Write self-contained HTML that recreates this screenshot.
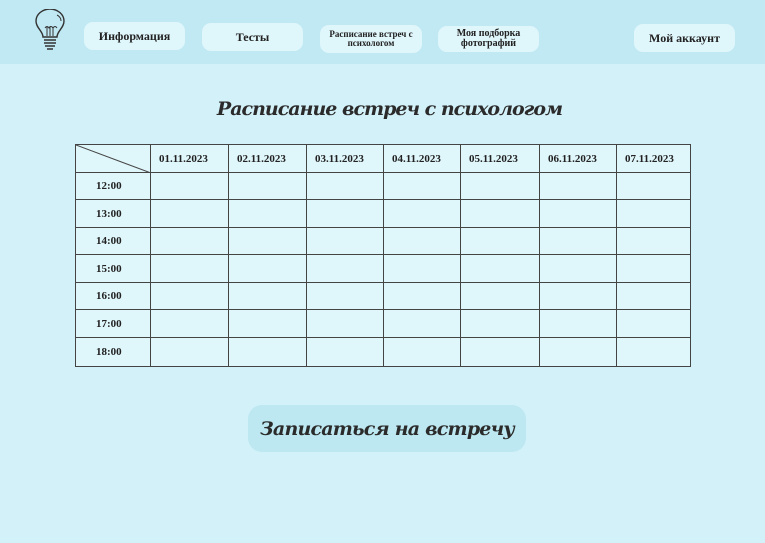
<!DOCTYPE html>
<html><head><meta charset="utf-8"><style>
*{margin:0;padding:0;box-sizing:border-box}
body{width:765px;height:543px;background:#d3f1f9;position:relative;overflow:hidden;font-family:"Liberation Serif","DejaVu Serif",serif;color:#222}
.hdr{position:absolute;left:0;top:0;width:765px;height:64px;background:#c0e9f3}
.btn{position:absolute;background:#dff6fb;border-radius:9px;display:flex;align-items:center;justify-content:center;text-align:center;font-weight:bold;font-size:12px;line-height:1.05;color:#222}
.title{position:absolute;left:0;width:765px;top:98px;text-align:center;font-family:"DejaVu Serif",serif;font-style:italic;font-weight:bold;font-size:19px;color:#2b2b2b;letter-spacing:-1px;white-space:nowrap;padding-left:14px}
table{position:absolute;left:75px;top:144px;width:615px;border-collapse:collapse;table-layout:fixed;background:#dff6fb}
td{border:1px solid #444;font-size:11px;font-weight:bold;padding:0 0 0 8px;text-align:left;overflow:hidden;white-space:nowrap;line-height:12px}
.cta{position:absolute;left:248px;top:405px;width:278px;height:47px;border-radius:14px;background:#bde8f1;display:flex;align-items:center;justify-content:center;font-family:"DejaVu Serif",serif;font-style:italic;font-weight:bold;font-size:19px;color:#2b2b2b;letter-spacing:-0.8px;white-space:nowrap}
</style></head><body>
<div class="hdr"></div>
<svg style="position:absolute;left:33px;top:9px" width="34" height="44" viewBox="0 0 34 44" fill="none" stroke="#333" stroke-width="1.4">
<path d="M10 28 C10 22 3 19 3 12 A14 12 0 0 1 31 12 C31 19 24 22 24 28 Z"/>
<path d="M11 31h12M11 34h12M12 37h10M14 40h6"/>
<path d="M14 27 V18 M17 27 V17 M20 27 V18 M12 19 q2 -3 4 0 q2 -3 4 0 q2 -3 4 0" stroke-width="1"/>
<path d="M24 6 q4 2 4 6" stroke-width="1"/>
</svg>
<div class="btn" style="left:84px;top:22px;width:101px;height:28px">Информация</div>
<div class="btn" style="left:202px;top:23px;width:101px;height:28px">Тесты</div>
<div class="btn" style="left:320px;top:25px;width:102px;height:28px;font-size:9px">Расписание встреч с<br>психологом</div>
<div class="btn" style="left:438px;top:26px;width:101px;height:26px;font-size:10px">Моя подборка<br>фотографий</div>
<div class="btn" style="left:634px;top:24px;width:101px;height:28px">Мой аккаунт</div>
<div class="title">Расписание встреч с психологом</div>
<table>
<colgroup><col style="width:75px"><col style="width:78px"><col style="width:78px"><col style="width:77px"><col style="width:77px"><col style="width:79px"><col style="width:77px"><col style="width:74px"></colgroup>
<tr style="height:28px"><td style="padding:0;position:relative"><svg style="display:block;position:absolute;left:0;top:0" width="75" height="28"><line x1="0" y1="0" x2="75" y2="28" stroke="#444"/></svg></td><td>01.11.2023</td><td>02.11.2023</td><td>03.11.2023</td><td>04.11.2023</td><td>05.11.2023</td><td>06.11.2023</td><td>07.11.2023</td></tr>
<tr style="height:27px"><td style="padding-left:20px">12:00</td><td></td><td></td><td></td><td></td><td></td><td></td><td></td></tr>
<tr style="height:28px"><td style="padding-left:20px">13:00</td><td></td><td></td><td></td><td></td><td></td><td></td><td></td></tr>
<tr style="height:27px"><td style="padding-left:20px">14:00</td><td></td><td></td><td></td><td></td><td></td><td></td><td></td></tr>
<tr style="height:28px"><td style="padding-left:20px">15:00</td><td></td><td></td><td></td><td></td><td></td><td></td><td></td></tr>
<tr style="height:27px"><td style="padding-left:20px">16:00</td><td></td><td></td><td></td><td></td><td></td><td></td><td></td></tr>
<tr style="height:28px"><td style="padding-left:20px">17:00</td><td></td><td></td><td></td><td></td><td></td><td></td><td></td></tr>
<tr style="height:29px"><td style="padding-left:20px">18:00</td><td></td><td></td><td></td><td></td><td></td><td></td><td></td></tr>
</table>
<div class="cta">Записаться на встречу</div>
</body></html>
